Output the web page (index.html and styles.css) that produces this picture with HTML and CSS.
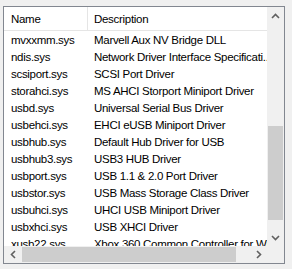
FILE: index.html
```html
<!DOCTYPE html>
<html lang="en">

<head>
  <meta charset="UTF-8">
  <title>Drivers</title>
  <link rel="stylesheet" href="styles.css">
</head>

<body>
  <div class="listview">
    <div class="viewport">
      <div class="header">
        <div class="col name">Name</div>
        <div class="col desc">Description</div>
      </div>
      <div class="rows">
        <div class="row"><span class="name">mvxxmm.sys</span><span class="desc">Marvell Aux NV Bridge DLL</span></div>
        <div class="row"><span class="name">ndis.sys</span><span class="desc">Network Driver Interface Specificati...</span></div>
        <div class="row"><span class="name">scsiport.sys</span><span class="desc">SCSI Port Driver</span></div>
        <div class="row"><span class="name">storahci.sys</span><span class="desc">MS AHCI Storport Miniport Driver</span></div>
        <div class="row"><span class="name">usbd.sys</span><span class="desc">Universal Serial Bus Driver</span></div>
        <div class="row"><span class="name">usbehci.sys</span><span class="desc">EHCI eUSB Miniport Driver</span></div>
        <div class="row"><span class="name">usbhub.sys</span><span class="desc">Default Hub Driver for USB</span></div>
        <div class="row"><span class="name">usbhub3.sys</span><span class="desc">USB3 HUB Driver</span></div>
        <div class="row"><span class="name">usbport.sys</span><span class="desc">USB 1.1 &amp; 2.0 Port Driver</span></div>
        <div class="row"><span class="name">usbstor.sys</span><span class="desc">USB Mass Storage Class Driver</span></div>
        <div class="row"><span class="name">usbuhci.sys</span><span class="desc">UHCI USB Miniport Driver</span></div>
        <div class="row"><span class="name">usbxhci.sys</span><span class="desc">USB XHCI Driver</span></div>
        <div class="row"><span class="name">xusb22.sys</span><span class="desc">Xbox 360 Common Controller for Win...</span></div>
      </div>
    </div>
    <div class="vscroll">
      <div class="arrow">
        <svg width="9" height="6" viewBox="0 0 9 6"><path d="M1 5 L4.5 1.5 L8 5" fill="none" stroke="#606060" stroke-width="1.6"/></svg>
      </div>
      <div class="track v">
        <div class="thumb"></div>
      </div>
      <div class="arrow">
        <svg width="9" height="6" viewBox="0 0 9 6"><path d="M1 1 L4.5 4.5 L8 1" fill="none" stroke="#606060" stroke-width="1.6"/></svg>
      </div>
    </div>
    <div class="hscroll">
      <div class="arrow">
        <svg width="6" height="9" viewBox="0 0 6 9"><path d="M5 1 L1.5 4.5 L5 8" fill="none" stroke="#606060" stroke-width="1.6"/></svg>
      </div>
      <div class="track h">
        <div class="thumb"></div>
      </div>
      <div class="arrow">
        <svg width="6" height="9" viewBox="0 0 6 9"><path d="M1 1 L4.5 4.5 L1 8" fill="none" stroke="#606060" stroke-width="1.6"/></svg>
      </div>
    </div>
    <div class="corner"></div>
  </div>
</body>

</html>
```

FILE: styles.css
```css
body {
  margin: 0;
  background-color: #f0f0f0;
  font-family: 'Liberation Sans', Arial, sans-serif;
  font-size: 11.5px;
  letter-spacing: -0.3px;
  color: #000000;
}

.listview {
  display: grid;
  grid-template-columns: 263px 17px;
  grid-template-rows: 239px 17px;
  width: 280px;
  margin: 6px 0 0 3px;
  border: 1px solid #828790;
  background-color: #ffffff;
}

.viewport {
  overflow: hidden;
}

.header {
  display: flex;
  height: 23px;
  border-bottom: 1px solid #e5e5e5;
}

.header .col {
  display: flex;
  align-items: center;
  white-space: nowrap;
}

.header .name {
  width: 76px;
  padding-left: 7px;
  border-right: 1px solid #e5e5e5;
}

.header .desc {
  padding-left: 6px;
  flex: 1;
}

.rows {
  padding-top: 1px;
}

.row {
  display: flex;
  height: 17px;
  line-height: 17px;
  white-space: nowrap;
}

.row .name {
  width: 77px;
  padding-left: 7px;
  flex-shrink: 0;
}

.row .desc {
  padding-left: 6px;
}

.vscroll {
  display: flex;
  flex-direction: column;
  background-color: #f0f0f0;
}

.hscroll {
  display: flex;
  background-color: #f0f0f0;
}

.arrow {
  width: 17px;
  height: 17px;
  flex-shrink: 0;
  display: flex;
  align-items: center;
  justify-content: center;
}

.track {
  flex: 1;
  display: flex;
}

.track.v {
  flex-direction: column;
  padding: 102px 1px 0;
}

.track.v .thumb {
  height: 94px;
  background-color: #cdcdcd;
}

.track.h {
  padding: 1px 0 1px 1px;
}

.track.h .thumb {
  width: 214px;
  background-color: #cdcdcd;
}

.corner {
  background-color: #f0f0f0;
}
```
